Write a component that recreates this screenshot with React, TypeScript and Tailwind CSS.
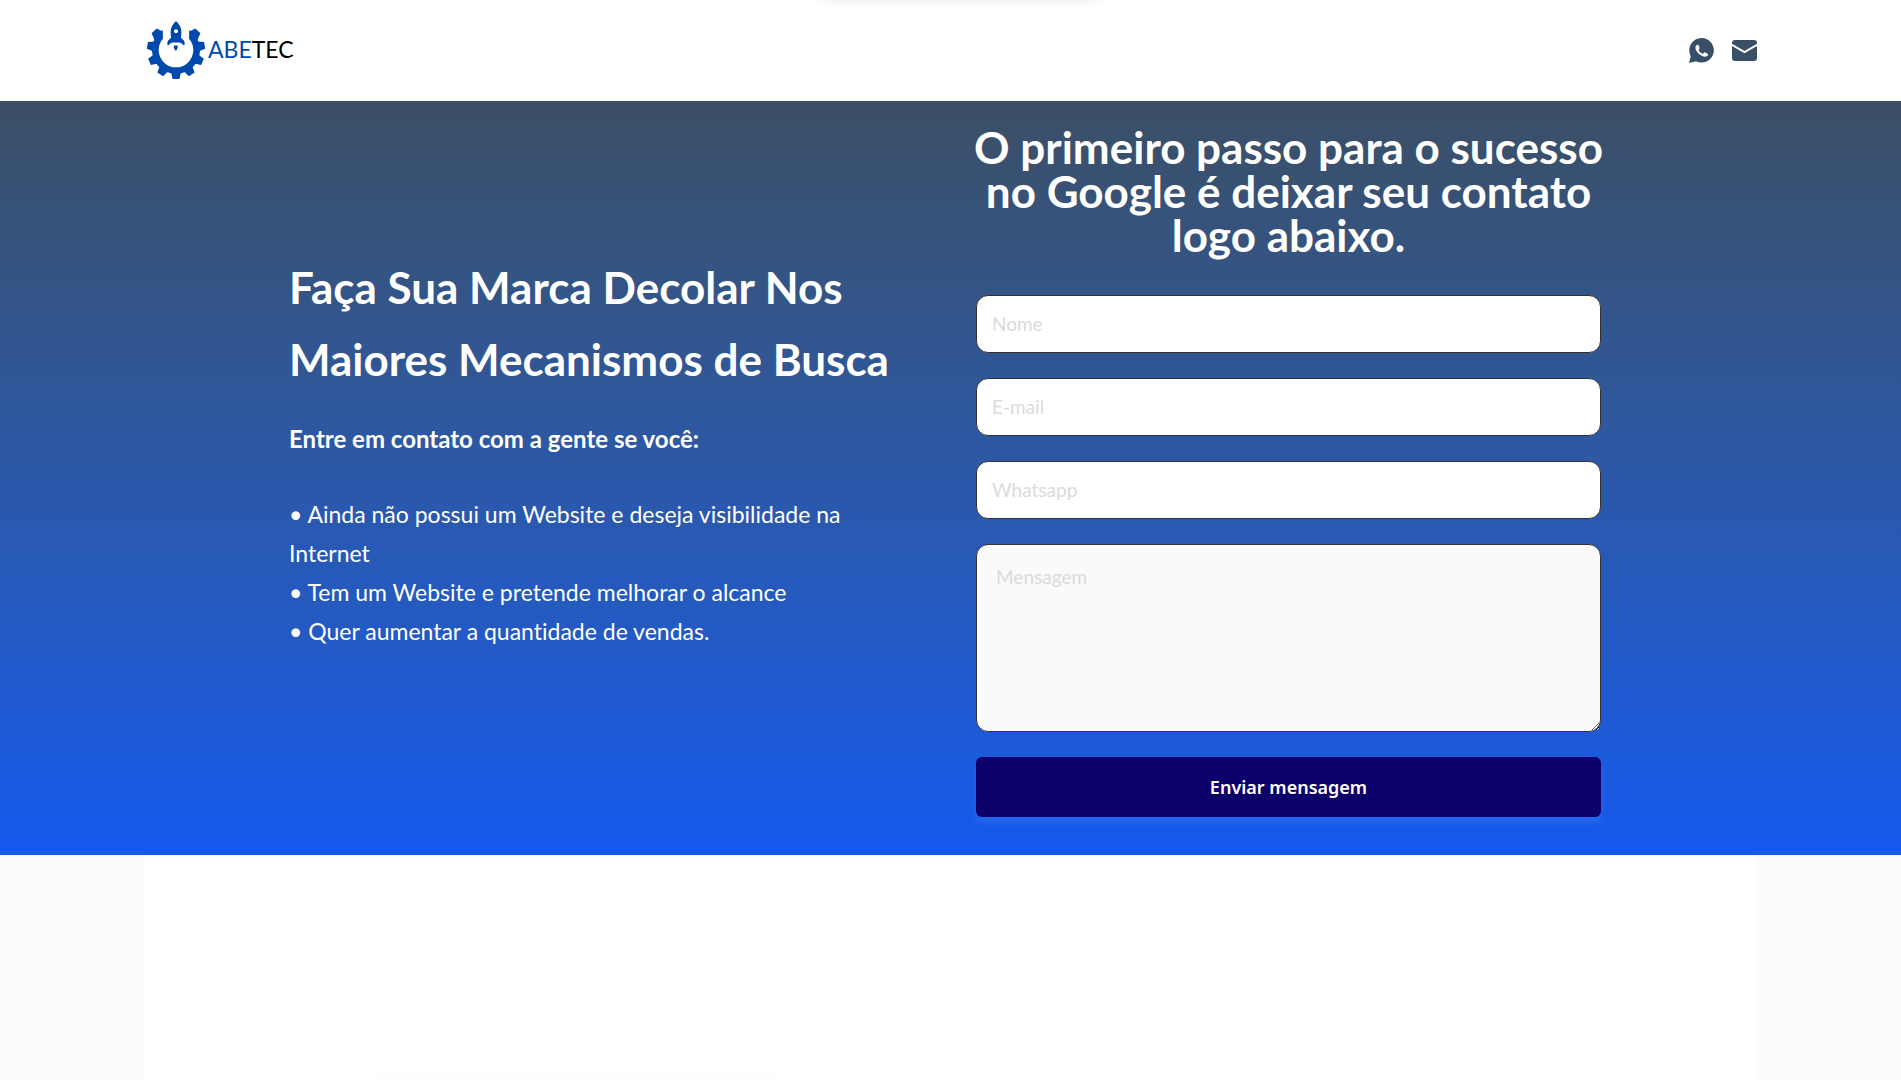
function GearRocket() {
  const teeth = [-99, -66, -33, 0, 33, 66, 99];
  return (
    <svg viewBox="0 0 60 60" className="ml-0.5 h-[60px] w-[60px]" fill="#004aad" aria-hidden="true">
      <path d="M16.7 10A24 24 0 1 0 43.3 10V19A17.3 17.3 0 1 1 16.7 19Z" />
      {teeth.map((a) => (
        <path key={a} d="M-5 22L-3.4 29H3.4L5 22Z" transform={`translate(30 30) rotate(${a})`} />
      ))}
      <path d="M5.6 13.2L10.6 8.4L16.7 11.4V19L9 21Z" />
      <path d="M54.4 13.2L49.4 8.4L43.3 11.4V19L51 21Z" />
      <path d="M30 1C34 4.6 35.6 8.2 35.4 12.8L35 17.8L37.8 20.6C39 22 38.8 24 38.2 25.8C36.5 23.6 34.8 22.6 33 22.4H27C25.2 22.6 23.5 23.6 21.8 25.8C21.2 24 21 22 22.2 20.6L25 17.8L24.6 12.8C24.4 8.2 26 4.6 30 1Z" />
      <circle cx="30" cy="11.3" r="2" fill="#fff" />
      <path d="M27.8 25.6H31.8C32 28 31.2 29.4 29.8 31C28.4 29.4 27.6 28 27.8 25.6Z" />
    </svg>
  );
}

function WhatsappIcon() {
  return (
    <svg viewBox="0 0 75 75" className="size-[25px]" aria-hidden="true">
      <path fill="#384f67" d="M38 0A36.8 36.8 0 1 1 21 69.6L0 75L5.2 54.5A36.8 36.8 0 0 1 38 0Z" />
      <path
        fill="#fff"
        d="M21 23C23 20 26.5 19.5 28.5 21L32 30C32 32 29 34.5 29 36.5C32 41.5 36 45 41 47C43 47 45 42.5 47 42.5L56.5 47C58 49 56.5 53.5 53 55C49 57 44 56.5 38 53C30 49 24 42.5 20.5 35C18.5 30 19 26 21 23Z"
      />
    </svg>
  );
}

function MailIcon() {
  return (
    <svg viewBox="0 0 25 21" className="h-[21px] w-[25px]" aria-hidden="true">
      <rect width="25" height="21" rx="3" fill="#384f67" />
      <path d="M-1 4.4L12.5 12L26 4.4" fill="none" stroke="#fff" strokeWidth="2" />
    </svg>
  );
}

const fields = [
  { id: "nome", label: "Nome", type: "text" },
  { id: "email", label: "E-mail", type: "email" },
  { id: "whatsapp", label: "Whatsapp", type: "tel" },
];

export default function App() {
  return (
    <div className="relative flex h-screen flex-col overflow-hidden bg-white font-['Lato',sans-serif] [font-variant-ligatures:none]">
      <div className="absolute -top-10 left-1/2 ml-2.5 h-9 w-[272px] -translate-x-1/2 shadow-[0_0_16px_rgba(0,0,0,0.16)]" />
      <header className="flex h-[101px] shrink-0 items-center justify-between px-36">
        <a href="#" className="flex items-center gap-0.5 pb-0.5 text-[23px] text-black">
          <GearRocket />
          <span>
            <span className="text-[#004aad]">ABE</span>TEC
          </span>
        </a>
        <nav className="flex items-center gap-[18px]">
          <a href="#whatsapp" aria-label="Whatsapp">
            <WhatsappIcon />
          </a>
          <a href="#email" aria-label="E-mail">
            <MailIcon />
          </a>
        </nav>
      </header>

      <main className="flex grow flex-col">
        <section className="grid grid-cols-2 items-center gap-x-[62px] bg-linear-to-b from-[#3b4f65] to-[#1559ee] pt-6 pr-[300px] pb-[38px] pl-[289px] text-white">
          <div className="pb-10">
            <h1 className="text-[44px] leading-[72px] font-bold">Faça Sua Marca Decolar Nos Maiores Mecanismos de Busca</h1>
            <p className="mt-6 text-2xl leading-10 font-bold">Entre em contato com a gente se você:</p>
            <ul className="mt-9 text-[23px] leading-[39px]">
              <li>• Ainda não possui um Website e deseja visibilidade na Internet</li>
              <li>• Tem um Website e pretende melhorar o alcance</li>
              <li>• Quer aumentar a quantidade de vendas.</li>
            </ul>
          </div>
          <form className="flex flex-col gap-[25px]" onSubmit={(e) => e.preventDefault()}>
            <h2 className="-mx-2 mb-[13px] text-center text-[44px] leading-[44px] font-bold">
              O primeiro passo para o sucesso no Google é deixar seu contato logo abaixo.
            </h2>
            {fields.map((f) => (
              <input
                key={f.id}
                id={f.id}
                type={f.type}
                aria-label={f.label}
                placeholder={f.label}
                className="h-[58px] w-full rounded-xl border border-[#333] bg-white px-[15px] pb-0.5 text-[19px] text-gray-800 placeholder:text-[#dddada]"
              />
            ))}
            <textarea
              aria-label="Mensagem"
              placeholder="Mensagem"
              className="h-[188px] w-full resize rounded-xl border border-[#333] bg-[#fafafa] px-[19px] py-[18px] text-[19px] text-gray-800 placeholder:text-[#dddada]"
            />
            <button
              type="submit"
              className="h-[60px] w-full rounded-md bg-[#0e006a] font-['Noto_Sans',sans-serif] text-lg font-semibold text-white shadow-[0_6px_6px_rgba(60,130,246,0.35)]"
            >
              Enviar mensagem
            </button>
          </form>
        </section>
        <section className="relative grow overflow-hidden bg-[#fafbfd] px-[145px]">
          <div className="h-full bg-white" />
          <div className="absolute -bottom-10 left-[375px] h-9 w-[400px] shadow-[0_0_20px_rgba(0,0,0,0.04)]" />
        </section>
      </main>
    </div>
  );
}
